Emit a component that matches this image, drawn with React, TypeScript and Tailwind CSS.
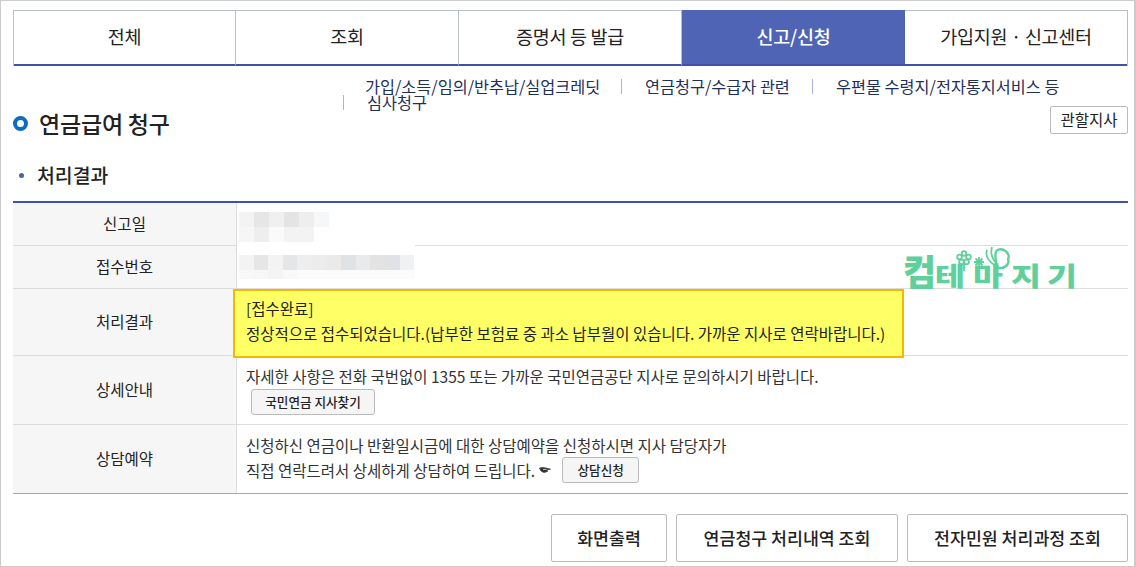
import type { ReactNode } from 'react';

const font = { fontFamily: '"Noto Sans CJK KR", "Noto Sans", sans-serif' };

const tabs = [
  { t: '전체', c: 'w-[222px] border-r border-r-[#b8c0c4]' },
  { t: '조회', c: 'w-[223px] border-r border-r-[#b8c0c4]' },
  { t: '증명서 등 발급', c: 'w-[223px] border-r border-r-[#b8c0c4]' },
  { t: '신고/신청', c: 'w-[223px] bg-[#4f64b4] text-white font-medium -mt-[1px]' },
  { t: '가입지원 · 신고센터', c: 'flex-1' },
];

function Mosaic({ rows, cell }: { rows: { h: string; colors: string[] }[]; cell: string }) {
  return (
    <div className="flex flex-col">
      {rows.map((r, i) => (
        <div key={i} className={`flex ${r.h}`}>
          {r.colors.map((c, j) => (
            <div key={j} className={cell} style={{ background: c }} />
          ))}
        </div>
      ))}
    </div>
  );
}

function Th({ children }: { children: ReactNode }) {
  return (
    <div className="w-[224px] shrink-0 bg-[#f6f6f6] border-r border-[#dddddd] flex items-center justify-center text-[15.5px] text-[#222]">
      {children}
    </div>
  );
}

function SmallBtn({ children, w }: { children: ReactNode; w: string }) {
  return (
    <span className={`${w} h-[26px] inline-flex items-center justify-center rounded-[3px] border border-[#bbbbbb] bg-[#f5f5f5] text-[12.6px] font-medium text-[#222]`}>
      {children}
    </span>
  );
}

function BigBtn({ children, w }: { children: ReactNode; w: string }) {
  return (
    <span className={`${w} h-[48px] inline-flex items-center justify-center rounded-[2px] border border-[#bbbbbb] bg-white text-[17.3px] font-medium text-[#222]`}>
      {children}
    </span>
  );
}

export default function App() {
  return (
    <div style={font} className="w-[1136px] h-[567px] overflow-hidden bg-white border border-[#cccccc] border-r-2 pl-3 pr-[6px] pt-[9px] text-[#222] relative">
      <div className="flex h-[56px] border-t border-[#b8c0c4] border-l border-r">
        {tabs.map(({ t, c }) => (
          <div
            key={t}
            className={`${c} flex items-center justify-center text-[18.5px] pb-[1px] tracking-[-0.3px] border-b-2 border-b-[#3f51ab]`}
          >
            {t}
          </div>
        ))}
      </div>

      <div className="ml-[330px] mt-[12px] h-[28px] text-[16.3px] leading-[16px] text-[#1f2f5c]">
        <div className="flex items-center">
          <span className="ml-[22px] w-[256px] whitespace-nowrap">가입/소득/임의/반추납/실업크레딧</span>
          <span className="h-[15px] w-px bg-[#a9b4dc] mt-[1px]" />
          <span className="ml-[23px] w-[167px] whitespace-nowrap">연금청구/수급자 관련</span>
          <span className="h-[15px] w-px bg-[#a9b4dc] mt-[1px]" />
          <span className="ml-[23px] whitespace-nowrap">우편물 수령지/전자통지서비스 등</span>
        </div>
        <div className="flex items-center">
          <span className="h-[15px] w-px bg-[#a9b4dc]" />
          <span className="ml-[23px]">심사청구</span>
        </div>
      </div>

      <div className="flex items-center justify-between h-[28px]">
        <div className="flex items-center mt-[6px]">
          <span className="w-[15px] h-[15px] rounded-full border-[4px] border-[#0b6cc0] bg-white" />
          <span className="ml-[11px] text-[23px] font-medium text-[#222] tracking-[-0.2px]">연금급여 청구</span>
        </div>
        <span className="w-[78px] h-[28px] inline-flex items-center justify-center rounded-[2px] border border-[#bbbbbb] text-[15.5px] text-[#222]">관할지사</span>
      </div>

      <div className="flex items-center h-[28px] mt-[27px]">
        <span className="ml-[6px] w-[5px] h-[5px] rounded-full bg-[#4a5fb5]" />
        <span className="ml-[13px] text-[19.4px] font-medium text-[#222]">처리결과</span>
      </div>

      <div className="mt-[12px] border-t-2 border-[#3f51ab] text-[15.5px]">
        <div className="flex h-[43px] border-b border-[#dddddd]">
          <Th>신고일</Th>
          <div className="pl-[2px] pt-[9px] bg-white -mb-[1px] relative">
            <Mosaic
              cell="w-[15px]"
              rows={[
                { h: 'h-[15px]', colors: ['#f3f3f3', '#e6e6e6', '#f0f0f0', '#e4e4e4', '#eeeeee', '#f6f7f9'] },
                { h: 'h-[15px]', colors: ['#f6f6f6', '#eeeeee', '#fafafa', '#f3f3f3', '#f3f3f3'] },
              ]}
            />
          </div>
        </div>
        <div className="flex h-[43px] border-b border-[#dddddd]">
          <Th>접수번호</Th>
          <div className="pl-[2px] pt-[11px] w-[178px] bg-white relative -mt-[2px]">
            <Mosaic
              cell="w-[14.6px]"
              rows={[
                { h: 'h-[15px]', colors: ['#f3f3f3', '#e6e6e6', '#f3f3f3', '#e4e6e8', '#eeeeee', '#ececec', '#eaeaea', '#dfe3e6', '#e8eaec', '#e3e3e3', '#dfe2e6', '#f0f1f2'] },
                { h: 'h-[9px]', colors: ['#f8f8f8', '#f7f7f7', '#f4f4f4', '#f9f9f9', '#fbfbfb', '#fbfbfb', '#fbfbfb', '#fbfbfb', '#fbfbfb', '#fbfbfb', '#fbfbfb', '#fbfbfb'] },
              ]}
            />
          </div>
        </div>
        <div className="flex h-[67px] border-b border-[#dddddd]">
          <Th>처리결과</Th>
          <div className="-ml-[4px] w-[671px] h-[69px] -mb-[2px] relative border-2 border-[#f5b800] bg-[#ffff66] pl-[11px] pt-[5px] leading-[25px] text-[#222]">
            <div>[접수완료]</div>
            <div className="whitespace-nowrap">정상적으로 접수되었습니다.(납부한 보험료 중 과소 납부월이 있습니다. 가까운 지사로 연락바랍니다.)</div>
          </div>
        </div>
        <div className="flex h-[69px] border-b border-[#dddddd]">
          <Th>상세안내</Th>
          <div className="pl-[9px] pt-[8px] leading-[24px] text-[#333]">
            <div className="whitespace-nowrap">자세한 사항은 전화 국번없이 1355 또는 가까운 국민연금공단 지사로 문의하시기 바랍니다.</div>
            <div className="ml-[5px] mt-[1px] flex">
              <SmallBtn w="w-[124px]">국민연금 지사찾기</SmallBtn>
            </div>
          </div>
        </div>
        <div className="flex h-[69px] border-b border-[#a8a8a8]">
          <Th>상담예약</Th>
          <div className="pl-[9px] pt-[9px] leading-[24px] text-[#333]">
            <div className="leading-[23px] whitespace-nowrap">신청하신 연금이나 반환일시금에 대한 상담예약을 신청하시면 지사 담당자가</div>
            <div className="flex items-center">
              <span className="whitespace-nowrap">직접 연락드려서 상세하게 상담하여 드립니다.</span>
              <span className="ml-[4px] mr-[11px] w-[12px] h-[8px] inline-flex">
                <svg viewBox="0 0 12 8" className="w-[12px] h-[8px]" fill="#333" stroke="#333" strokeWidth="0.7">
                  <path d="M0.5 2 L4 1.5 L7 2 L11.5 3.2 L8 3.8 L8.5 5.5 L5 6.5 L2 5 Z" />
                  <path d="M4 3.4 H7.5" stroke="#fff" fill="none" />
                </svg>
              </span>
              <SmallBtn w="w-[77px]">상담신청</SmallBtn>
            </div>
          </div>
        </div>
      </div>

      <div className="mt-[20px] flex justify-end gap-[9px]">
        <BigBtn w="w-[116px]">화면출력</BigBtn>
        <BigBtn w="w-[222px]">연금청구 처리내역 조회</BigBtn>
        <BigBtn w="w-[221px]">전자민원 처리과정 조회</BigBtn>
      </div>

      <div className="absolute left-[902px] top-[243px] w-[190px] h-[48px] pointer-events-none">
        <div className="absolute left-0 top-0 h-[46px] flex items-end font-black text-[#5fcf9b] whitespace-nowrap">
          <span className="w-[32px] text-[36px] leading-[40px]">컴</span>
          <span className="w-[38px] inline-block origin-left scale-x-125 text-[26px] leading-[30px]">테</span>
          <span className="w-[38px] inline-block origin-left scale-x-125 text-[26px] leading-[30px]">마</span>
          <span className="w-[36px] inline-block origin-left scale-x-125 text-[26px] leading-[30px]">지</span>
          <span className="w-[36px] inline-block origin-left scale-x-125 text-[26px] leading-[30px]">기</span>
        </div>
        <svg viewBox="0 0 180 48" className="absolute inset-0 w-[180px] h-[48px]" fill="none" stroke="#5fcf9b" strokeWidth="1.8">
          <circle cx="61" cy="9.5" r="2.3" />
          <circle cx="65.5" cy="13" r="2.3" />
          <circle cx="63.5" cy="18" r="2.3" />
          <circle cx="58.5" cy="18" r="2.3" />
          <circle cx="56.5" cy="13" r="2.3" />
          <path d="M61 20 V27" />
          <path d="M76 13 V23 M71 18 H81 M72.5 14.5 L79.5 21.5 M79.5 14.5 L72.5 21.5" />
          <path d="M84 6 C82 12 86 18 93 22" />
          <path d="M89 3 C87 10 90 16 94 20" />
          <path d="M93 7 C100 2 108 10 105 15 C107 20 102 25 95 24 C92 18 92 12 93 7" strokeWidth="2.4" />
        </svg>
      </div>
    </div>
  );
}
